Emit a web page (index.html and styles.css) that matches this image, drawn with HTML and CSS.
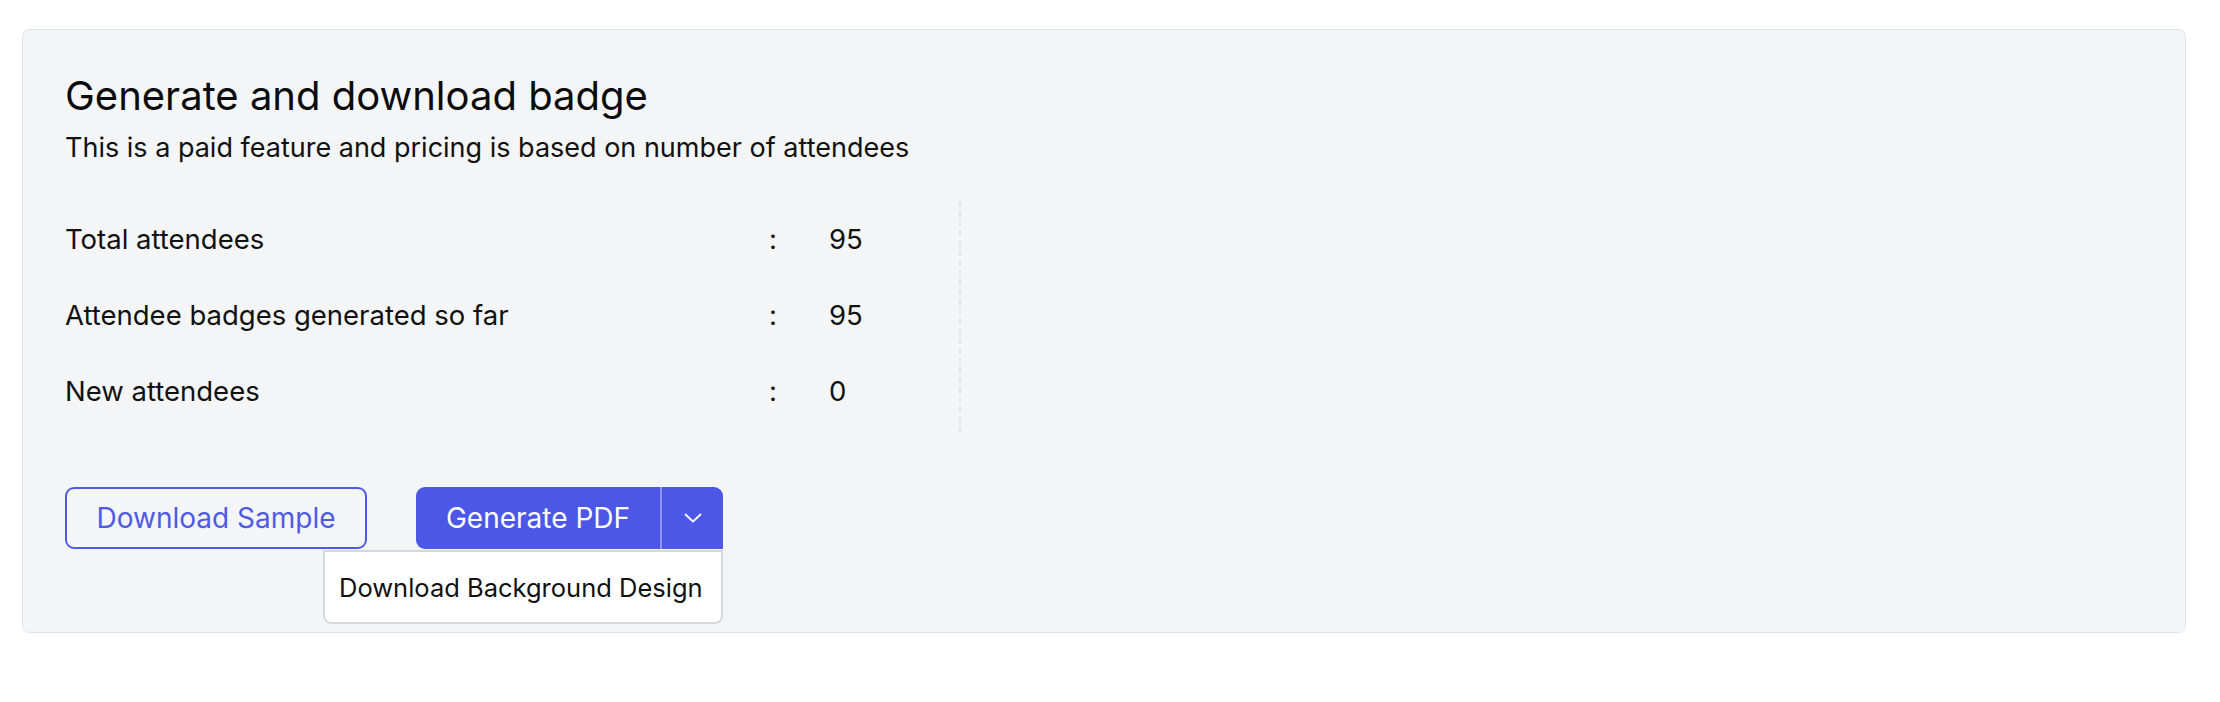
FILE: index.html
```html
<!DOCTYPE html>
<html lang="en">
<head>
<meta charset="utf-8">
<title>Generate and download badge</title>
<link rel="stylesheet" href="styles.css">
</head>
<body>
<section class="card">
  <h1 class="title">Generate and download badge</h1>
  <p class="subtitle">This is a paid feature and pricing is based on number of attendees</p>
  <div class="stats">
    <div class="label">Total attendees</div><div class="colon">:</div><div class="value">95</div>
    <div class="label">Attendee badges generated so far</div><div class="colon">:</div><div class="value">95</div>
    <div class="label">New attendees</div><div class="colon">:</div><div class="value">0</div>
  </div>
  <div class="actions">
    <button class="btn-outline">Download Sample</button>
    <div class="split">
      <button class="split-main">Generate PDF</button>
      <button class="split-toggle" aria-label="More options">
        <svg width="18" height="10" viewBox="0 0 18 10"><path d="M1.5 1.5 L9 8.5 L16.5 1.5" fill="none" stroke="#fff" stroke-width="1.8" stroke-linecap="round" stroke-linejoin="round"/></svg>
      </button>
      <div class="menu">
        <div class="menu-item">Download Background Design</div>
      </div>
    </div>
  </div>
</section>
</body>
</html>
```
FILE: styles.css
```css
* { box-sizing: border-box; }
body {
  margin: 0;
  background: #ffffff;
  font-family: Inter, "Noto Sans", sans-serif;
  color: #111111;
}
.card {
  margin: 29px 34px 0 22px;
  background: #f4f5f7;
  border: 1px solid #e1e3e8;
  border-radius: 8px;
  padding: 42px 42px 83px 42px;
}
.title {
  margin: 0;
  font-size: 40px;
  font-weight: 400;
  line-height: 48px;
  color: #0b0b0b;
}
.subtitle {
  margin: 10px 0 0 0;
  font-size: 27px;
  line-height: 36px;
  color: #111111;
}
.stats {
  display: inline-grid;
  grid-template-columns: 704px 60px 130px;
  grid-auto-rows: 76px;
  align-items: center;
  margin-top: 35px;
  padding: 0 0 3px 0;
  border-right: 2px dashed #e2e4e8;
  font-size: 27.5px;
  color: #111111;
}
.actions {
  display: flex;
  align-items: flex-start;
  gap: 49px;
  margin-top: 55px;
}
.btn-outline {
  width: 302px;
  height: 62px;
  border: 2px solid #4f5ae6;
  border-radius: 9px;
  background: transparent;
  color: #4f5ae6;
  font-family: inherit;
  font-size: 28px;
  padding: 0;
}
.split {
  position: relative;
  display: flex;
  height: 62px;
}
.split-main {
  width: 244px;
  height: 62px;
  border: none;
  background: #4c57e7;
  color: #ffffff;
  font-family: inherit;
  font-size: 28px;
  border-radius: 9px 0 0 9px;
  padding: 0;
}
.split-toggle {
  width: 63px;
  height: 62px;
  border: none;
  border-left: 2px solid #8e96f0;
  background: #4c57e7;
  border-radius: 0 9px 0 0;
  display: flex;
  align-items: center;
  justify-content: center;
  padding: 0;
}
.menu {
  position: absolute;
  top: 63px;
  right: 0;
  width: 400px;
  height: 74px;
  background: #ffffff;
  border: 2px solid #d6d8dd;
  border-radius: 0 0 8px 8px;
  display: flex;
  align-items: center;
  padding-left: 14px;
}
.menu-item {
  font-size: 25.5px;
  color: #111111;
  white-space: nowrap;
}
```
